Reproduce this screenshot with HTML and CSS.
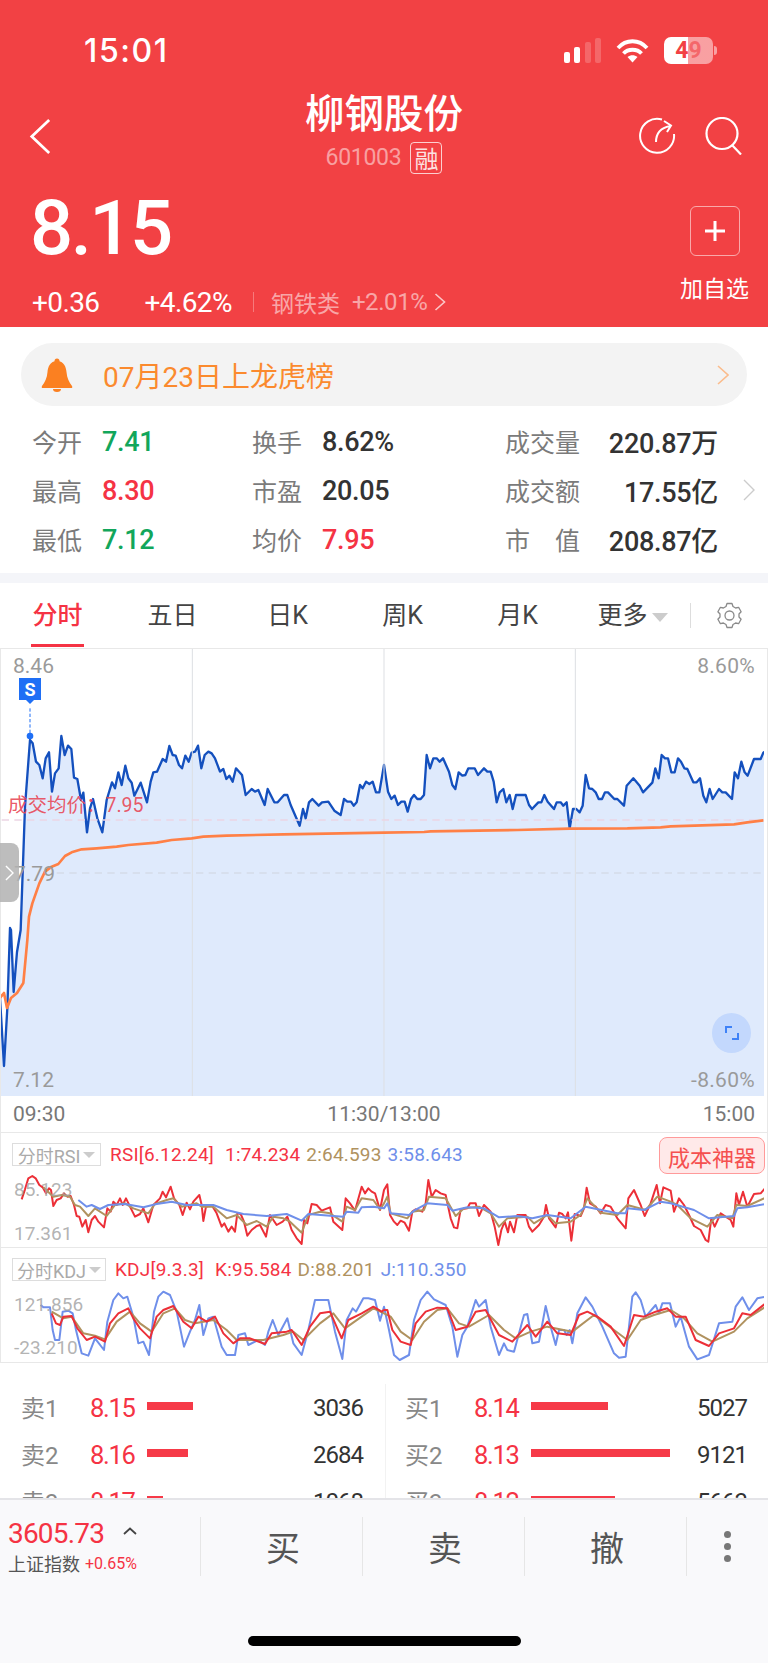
FILE: index.html
```html
<!DOCTYPE html>
<html lang="zh-CN">
<head>
    <meta charset="utf-8">
    <title>柳钢股份</title>
    <link rel="stylesheet" href="styles.css">
</head>
<body>
<div class="page">
    <header class="head">
        <div class="status">
            <span class="time">15:01</span>
            <div class="status-icons">
                <div class="signal"><i class="on s1"></i><i class="on s2"></i><i class="s3"></i><i class="s4"></i></div>
                <svg class="wifi" viewBox="0 0 33 24"><path d="M2 9C10 0 23 0 31 9M7.5 14.5C12 9.5 21 9.5 25.5 14.5" fill="none" stroke="#fff" stroke-width="3.8"/><path d="M16.5 23.5L11.5 18C14.5 15.5 18.5 15.5 21.5 18Z" fill="#fff"/></svg>
                <div class="battery"><span class="b-on">4</span><span class="b-off">9</span></div>
                <i class="nub"></i>
            </div>
        </div>

        <div class="nav">
            <svg class="back" viewBox="0 0 24 40"><path d="M22 2L3 20L22 38" fill="none" stroke="#fff" stroke-width="3"/></svg>
            <div class="title-box">
                <h1>柳钢股份</h1>
                <div class="code"><span>601003</span><b class="rong">融</b></div>
            </div>
            <div class="nav-icons">
                <svg class="nav-icon" viewBox="0 0 38 38"><path d="M24 2.5A17 17 0 1 0 36 17" fill="none" stroke="#fff" stroke-width="2"/><path d="M18 25C18 16 22 11 32 9M26 4L33 8.5L29 15" fill="none" stroke="#fff" stroke-width="2"/></svg>
                <svg class="nav-icon" viewBox="0 0 38 38"><circle cx="18" cy="16.5" r="15.5" fill="none" stroke="#fff" stroke-width="2.2"/><path d="M28 28L37 37.5" stroke="#fff" stroke-width="2.2"/></svg>
            </div>
        </div>

        <div class="quote">
            <div>
                <div class="price">8.15</div>
                <div class="change">
                    <span class="chg-a">+0.36</span>
                    <span class="chg-b">+4.62%</span>
                    <i class="chg-sep"></i>
                    <span class="sector">钢铁类</span>
                    <span class="sector-pct">+2.01%</span>
                    <svg class="sector-arrow" viewBox="0 0 12 18"><path d="M1.5 1L10.5 9L1.5 17" fill="none" stroke="#fff" stroke-opacity=".7" stroke-width="1.6"/></svg>
                </div>
            </div>
            <div class="add">
                <div class="add-btn"><svg viewBox="0 0 20 20"><path d="M10 0V20M0 10H20" stroke="#fff" stroke-width="3"/></svg></div>
                <span>加自选</span>
            </div>
        </div>
    </header>

    <div class="notice">
        <svg class="bell" viewBox="0 0 32 34"><circle cx="16" cy="3" r="2.5" fill="#FB8021"/><path d="M16 3C9 3 7 9 6.5 14C6 20 4 24 1 28Q0 30 2 30H30Q32 30 31 28C28 24 26 20 25.5 14C25 9 23 3 16 3Z" fill="#FB8021"/><path d="M12 31a4 3 0 0 0 8 0z" fill="#FB8021"/></svg>
        <span class="notice-text">07月23日上龙虎榜</span>
        <svg class="notice-arrow" viewBox="0 0 12 20"><path d="M1 1L11 10L1 19" fill="none" stroke="#FBBC8C" stroke-width="1.6"/></svg>
    </div>

    <section class="stats">
        <div class="stat-grid">
            <div class="stat"><span class="lbl">今开</span><span class="val green">7.41</span></div>
            <div class="stat"><span class="lbl">换手</span><span class="val">8.62%</span></div>
            <div class="stat wide"><span class="lbl">成交量</span><span class="val">220.87万</span></div>
            <div class="stat"><span class="lbl">最高</span><span class="val red">8.30</span></div>
            <div class="stat"><span class="lbl">市盈</span><span class="val">20.05</span></div>
            <div class="stat wide"><span class="lbl">成交额</span><span class="val">17.55亿</span></div>
            <div class="stat"><span class="lbl">最低</span><span class="val green">7.12</span></div>
            <div class="stat"><span class="lbl">均价</span><span class="val red">7.95</span></div>
            <div class="stat wide"><span class="lbl spread">市值</span><span class="val">208.87亿</span></div>
        </div>
        <svg class="stats-arrow" viewBox="0 0 12 22"><path d="M1 1L11 11L1 21" fill="none" stroke="#ccc" stroke-width="1.4"/></svg>
    </section>

    <div class="band"></div>

    <nav class="tabs">
        <a class="tab active"><span>分时</span></a>
        <a class="tab"><span>五日</span></a>
        <a class="tab"><span>日K</span></a>
        <a class="tab"><span>周K</span></a>
        <a class="tab"><span>月K</span></a>
        <a class="tab"><span>更多<i class="tri"></i></span></a>
        <div class="tab-gear">
            <svg viewBox="0 0 26 27"><path d="M10.5 1.5h5l1 3 2.6 1.5 3-.7 2.5 4.4-2.1 2.3v3l2.1 2.3-2.5 4.4-3-.7-2.6 1.5-1 3h-5l-1-3-2.6-1.5-3 .7-2.5-4.4 2.1-2.3v-3L1.4 9.7l2.5-4.4 3 .7 2.6-1.5z" fill="none" stroke="#8a8a8a" stroke-width="1.3" stroke-linejoin="round"/><circle cx="13" cy="13.5" r="4.5" fill="none" stroke="#8a8a8a" stroke-width="1.3"/></svg>
        </div>
    </nav>

    <section class="chart-box">
        <div class="main-chart">
            <svg class="fill-svg" viewBox="3 27 2289 1341">
                <polyline class="price-line" points="-20,1500 -20,1074 0,1074 12,1278 22,1104 30,864 33,870 41,1056 51,936 62,870 75,500 90,300 98,310 108,365 118,375 128,415 137,355 147,337 156,455 165,400 176,385 184,288 194,345 204,317 214,327 222,413 232,417 243,480 250,458 261,577 270,505 279,477 292,535 307,577 320,480 336,427 345,445 355,397 365,435 376,377 385,415 395,428 403,467 422,428 441,487 452,425 460,397 471,395 488,357 498,365 508,318 518,345 527,347 537,375 546,385 556,347 566,365 575,338 585,335 594,317 604,385 614,345 625,335 635,340 645,355 660,395 670,387 679,417 688,407 698,425 708,385 726,405 737,465 755,447 765,455 775,450 794,495 803,447 823,487 833,487 852,465 862,465 872,495 899,557 909,507 917,535 927,487 937,477 956,497 966,487 985,485 1003,512 1022,525 1032,477 1042,485 1053,485 1061,497 1070,487 1080,435 1088,445 1098,425 1108,432 1118,425 1128,457 1138,457 1152,375 1164,455 1174,477 1184,467 1194,495 1204,485 1214,485 1223,515 1233,477 1242,465 1252,477 1262,477 1272,465 1280,345 1290,385 1300,355 1310,355 1319,365 1329,355 1347,395 1357,435 1366,447 1376,397 1387,407 1396,405 1405,385 1424,385 1434,405 1452,385 1462,395 1472,395 1481,425 1490,487 1499,457 1510,447 1519,487 1529,465 1538,507 1548,465 1577,465 1587,495 1596,507 1615,487 1624,487 1633,465 1643,485 1662,507 1670,487 1682,487 1690,497 1700,487 1709,565 1719,507 1729,507 1739,517 1748,497 1757,405 1767,445 1777,447 1787,457 1796,477 1806,477 1815,457 1824,457 1843,477 1852,477 1872,497 1880,437 1900,415 1919,437 1929,457 1957,428 1966,385 1976,415 1985,345 1995,355 2004,355 2014,397 2024,397 2034,355 2043,365 2053,385 2062,387 2080,427 2090,427 2100,415 2110,467 2119,487 2129,447 2138,477 2157,447 2167,457 2177,457 2196,477 2204,397 2214,415 2224,365 2234,397 2243,407 2262,357 2282,357 2290,338 2310,325 2310,1500"/>
                <path class="grid-v" d="M577 0V1400M1152 0V1400M1726 0V1400"/>
                <path class="dash-red" d="M5 540H2292"/>
                <path class="dash-grey" d="M170 699H2292"/>
                <polyline class="avg-line" points="0,1074 12,1059 21,1104 33,1074 51,1059 70,1029 82,900 87,830 97,790 118,730 135,695 155,680 175,672 195,648 215,637 245,628 290,625 350,620 385,615 470,608 515,600 575,595 610,590 680,587 850,583 1152,578 1272,576 1292,574 1552,570 1709,566 1882,565 1982,562 2012,559 2202,553 2242,547 2290,541"/>
                <path class="flag-dash" d="M90 205V282"/>
                <circle cx="90" cy="288" r="10" fill="#1F6FF5"/>
            </svg>
            <span class="axis tl">8.46</span>
            <span class="axis tr">8.60%</span>
            <span class="axis bl">7.12</span>
            <span class="axis br">-8.60%</span>
            <span class="axis mid">7.79</span>
            <span class="avg-label">成交均价：7.95</span>
            <b class="s-flag">S</b>
            <div class="handle"><svg viewBox="0 0 10 18"><path d="M1 1L9 9L1 17" fill="none" stroke="#fff" stroke-width="1.6"/></svg></div>
            <div class="expand"><svg viewBox="0 0 14 14"><path d="M1 7V1H7M13 7V13H7" fill="none" stroke="#3F82F7" stroke-width="2"/></svg></div>
        </div>

        <div class="time-row"><span>09:30</span><span>11:30/13:00</span><span>15:00</span></div>

        <div class="sub-panel">
            <svg class="fill-svg" viewBox="3 129 2289 342">
                <polyline class="ln ln-red" points="65,328 75,298 85,265 97,258 107,265 118,285 128,292 138,310 147,295 153,300 160,348 170,330 182,325 192,310 202,320 212,318 222,345 230,378 238,380 247,410 257,390 265,427 275,390 285,378 295,395 312,412 322,355 332,365 340,335 350,345 360,325 368,345 378,325 390,350 405,380 420,372 430,355 445,397 460,345 480,325 488,305 498,322 512,290 522,325 538,345 548,375 560,338 570,358 580,335 598,315 605,345 610,393 618,350 635,345 650,370 665,410 673,400 685,425 695,410 705,425 712,370 722,372 732,395 742,437 755,420 770,408 780,405 798,440 810,375 830,405 848,395 862,380 875,420 890,445 905,462 912,390 922,400 935,342 950,345 965,362 990,352 1000,395 1027,420 1037,325 1050,340 1065,362 1085,290 1095,310 1105,295 1115,305 1125,310 1140,360 1152,300 1162,283 1170,375 1182,395 1192,405 1202,392 1214,398 1227,422 1237,365 1247,358 1267,365 1277,340 1285,270 1295,320 1307,300 1322,310 1337,315 1352,385 1362,412 1372,415 1382,358 1402,355 1410,340 1427,340 1437,378 1452,345 1472,365 1484,410 1495,465 1504,420 1514,395 1524,427 1530,395 1542,427 1552,375 1577,375 1587,410 1597,425 1617,405 1632,380 1638,345 1647,385 1667,412 1677,368 1687,372 1697,385 1704,367 1714,452 1724,372 1742,378 1752,355 1760,293 1770,340 1787,350 1802,370 1817,345 1832,350 1852,385 1877,415 1885,325 1902,300 1922,345 1934,378 1952,340 1970,285 1980,340 1990,292 2012,302 2022,365 2037,325 2052,345 2067,375 2082,408 2102,420 2117,450 2125,455 2134,385 2144,410 2162,370 2192,390 2200,410 2209,310 2217,345 2229,305 2242,350 2262,312 2282,310 2297,293"/>
                <polyline class="ln ln-brown" points="130,292 160,320 185,315 210,320 225,345 240,350 265,378 285,355 320,378 345,345 375,340 400,355 445,370 465,342 500,330 520,325 545,350 590,340 605,350 640,350 680,385 710,375 740,405 770,393 800,410 820,380 850,385 870,395 905,428 925,375 960,365 990,370 1027,395 1040,350 1065,360 1085,325 1120,330 1140,358 1152,340 1162,320 1172,370 1222,385 1237,365 1272,360 1287,320 1337,325 1367,378 1392,355 1437,350 1472,370 1497,410 1522,385 1582,380 1602,400 1642,375 1667,400 1712,395 1742,375 1762,325 1802,368 1852,375 1882,345 1937,360 1972,320 2012,335 2032,345 2072,385 2122,410 2152,375 2197,385 2209,345 2242,348 2297,323"/>
                <polyline class="ln ln-blue" points="235,330 260,350 275,345 300,357 325,345 375,342 430,352 470,342 515,335 560,345 640,345 680,360 730,372 800,378 860,372 905,392 925,372 1000,378 1030,380 1040,365 1075,368 1085,352 1120,350 1152,355 1162,340 1172,370 1227,375 1242,362 1282,340 1342,345 1357,362 1402,352 1452,355 1497,382 1552,378 1597,385 1642,375 1712,385 1757,350 1852,370 1877,370 1882,355 1932,360 1982,335 2012,340 2082,360 2127,385 2202,378 2212,355 2242,352 2297,342"/>
            </svg>
            <div class="sub-head">
                <span class="chip">分时RSI<i class="tri small"></i></span>
                <span class="leg red-t name">RSI[6.12.24]</span>
                <span class="leg red-t">1:74.234</span>
                <span class="leg brown-t">2:64.593</span>
                <span class="leg blue-t">3:58.643</span>
            </div>
            <span class="sub-val v-top">85.123</span>
            <span class="sub-val v-low">17.361</span>
            <span class="cost-btn">成本神器</span>
        </div>

        <div class="sub-panel">
            <svg class="fill-svg" viewBox="3 474 2289 342">
                <polyline class="ln ln-blue" points="122,645 130,652 150,652 158,720 165,750 178,750 188,665 205,662 218,670 228,720 245,790 265,797 285,745 312,780 322,695 340,630 355,610 370,625 382,620 400,680 415,760 430,755 447,795 462,665 475,620 490,605 510,615 530,665 552,770 570,725 585,690 598,645 610,735 625,685 640,680 665,770 680,795 705,795 715,735 735,730 745,765 775,750 795,765 805,725 818,690 835,735 862,685 880,760 905,795 925,720 945,630 985,630 1005,725 1027,807 1040,690 1058,655 1068,665 1090,625 1105,625 1125,630 1140,692 1152,650 1167,720 1182,795 1199,810 1227,795 1242,690 1262,630 1282,605 1302,628 1337,645 1357,710 1372,800 1387,735 1402,710 1427,630 1437,650 1457,630 1472,710 1497,795 1512,760 1522,780 1542,785 1572,675 1582,672 1597,760 1617,755 1637,648 1652,710 1667,765 1677,720 1692,720 1700,735 1709,720 1717,760 1732,670 1757,622 1777,650 1807,710 1842,790 1857,803 1877,800 1897,620 1907,607 1922,630 1937,680 1967,645 1977,670 1987,640 2010,640 2027,710 2042,680 2067,770 2092,808 2127,795 2157,700 2197,695 2207,650 2227,622 2247,660 2272,625 2297,620"/>
                <polyline class="ln ln-brown" points="155,665 190,685 215,680 250,730 285,737 315,748 350,695 390,665 420,700 455,725 490,670 525,655 555,690 585,700 640,690 680,720 710,750 790,750 850,735 880,725 910,750 960,700 1000,670 1035,715 1085,680 1120,655 1152,670 1172,680 1202,725 1237,750 1272,695 1312,660 1342,655 1377,700 1407,710 1467,675 1512,720 1547,745 1592,725 1642,710 1717,725 1782,675 1842,720 1882,750 1922,690 1962,675 2012,660 2052,685 2092,730 2137,755 2202,725 2242,685 2297,650"/>
                <polyline class="ln ln-red" points="155,670 168,700 180,705 190,680 215,678 232,715 260,750 285,740 315,755 330,700 355,670 385,655 400,685 420,715 450,745 470,680 490,660 520,648 550,695 575,715 595,680 620,695 645,680 670,730 700,760 720,745 750,745 795,762 815,730 860,725 875,720 905,765 930,710 960,670 990,665 1025,745 1045,690 1085,670 1120,650 1145,665 1152,660 1162,660 1177,720 1202,755 1232,765 1247,700 1277,665 1312,653 1342,655 1367,720 1402,710 1427,665 1457,660 1497,735 1537,755 1582,705 1607,740 1642,695 1672,730 1712,735 1737,675 1762,665 1792,680 1832,710 1872,768 1902,675 1932,680 1967,665 2002,655 2027,680 2057,680 2087,750 2127,768 2157,730 2202,715 2227,670 2252,675 2297,640"/>
            </svg>
            <div class="sub-head">
                <span class="chip kdj">分时KDJ<i class="tri small"></i></span>
                <span class="leg red-t name">KDJ[9.3.3]</span>
                <span class="leg red-t">K:95.584</span>
                <span class="leg brown-t">D:88.201</span>
                <span class="leg blue-t">J:110.350</span>
            </div>
            <span class="sub-val v-top">121.856</span>
            <span class="sub-val v-low2">-23.210</span>
        </div>
    </section>

    <section class="book">
        <div class="book-col left">
            <div class="book-row"><span class="b-lbl">卖1</span><span class="b-price">8.15</span><span class="b-bar"><i style="width:46px"></i></span><span class="b-qty">3036</span></div>
            <div class="book-row"><span class="b-lbl">卖2</span><span class="b-price">8.16</span><span class="b-bar"><i style="width:41px"></i></span><span class="b-qty">2684</span></div>
            <div class="book-row"><span class="b-lbl">卖3</span><span class="b-price">8.17</span><span class="b-bar"><i style="width:16px"></i></span><span class="b-qty">1068</span></div>
        </div>
        <div class="book-col right">
            <div class="book-row"><span class="b-lbl">买1</span><span class="b-price">8.14</span><span class="b-bar"><i style="width:77px"></i></span><span class="b-qty">5027</span></div>
            <div class="book-row"><span class="b-lbl">买2</span><span class="b-price">8.13</span><span class="b-bar"><i style="width:139px"></i></span><span class="b-qty">9121</span></div>
            <div class="book-row"><span class="b-lbl">买3</span><span class="b-price">8.12</span><span class="b-bar"><i style="width:84px"></i></span><span class="b-qty">5663</span></div>
        </div>
    </section>

    <footer class="foot">
        <div class="foot-row">
            <div class="index">
                <div class="index-top"><span class="index-val">3605.73</span><svg class="caret" viewBox="0 0 14 8"><path d="M1 7L7 1.5L13 7" fill="none" stroke="#444" stroke-width="1.8"/></svg></div>
                <div class="index-sub"><span>上证指数</span><span class="index-pct">+0.65%</span></div>
            </div>
            <div class="act">买</div>
            <div class="act">卖</div>
            <div class="act">撤</div>
            <div class="act more"><i></i><i></i><i></i></div>
        </div>
        <div class="home-bar"></div>
    </footer>
</div>
</body>
</html>
```

FILE: styles.css
```css
* {
    box-sizing: border-box;
}
body {
    margin: 0;
    background-color: #fff;
    font-family: Roboto, "Noto Sans CJK SC", sans-serif;
    color: #333;
}
i {
    font-style: normal;
}
.page {
    width: 768px;
    height: 1663px;
    overflow: hidden;
    display: flex;
    flex-direction: column;
}

/* red header */
.head {
    height: 327px;
    flex: none;
    padding-top: 37px;
    background-color: #F24144;
    color: #fff;
}
.status {
    display: flex;
    justify-content: space-between;
    align-items: center;
    height: 27px;
    padding: 0 51px 0 84px;
}
.time {
    font-family: Inter, sans-serif;
    font-size: 32px;
    font-weight: 500;
    letter-spacing: 1.6px;
}
.status-icons {
    display: flex;
    align-items: center;
}
.signal {
    display: flex;
    align-items: flex-end;
    gap: 4.5px;
    height: 25px;
    margin-right: 15px;
}
.signal i {
    width: 6px;
    border-radius: 2px;
    background-color: rgba(255,255,255,.2);
}
.signal i.on {
    background-color: #fff;
}
.s1 { height: 11px; }
.s2 { height: 16px; }
.s3 { height: 21px; }
.s4 { height: 25px; }
.wifi {
    width: 33px;
    height: 24px;
    margin-right: 15px;
}
.battery {
    width: 49px;
    height: 27px;
    border-radius: 7px;
    display: flex;
    justify-content: center;
    align-items: center;
    font-size: 23px;
    font-weight: 700;
    background: linear-gradient(90deg, #fff 48%, rgba(255,255,255,.5) 48%);
}
.b-on {
    color: #F24144;
}
.b-off {
    color: rgba(242,65,68,.6);
}
.nub {
    width: 3px;
    height: 9px;
    margin-left: 1px;
    border-radius: 0 3px 3px 0;
    background-color: rgba(255,255,255,.5);
}

.nav {
    display: grid;
    grid-template-columns: 1fr auto 1fr;
    align-items: center;
    height: 84px;
    margin-top: 30px;
    padding: 0 26px;
}
.back {
    width: 22px;
    height: 39px;
    margin-left: 3px;
}
.title-box {
    text-align: center;
}
h1 {
    margin: -3px 0 0;
    font-size: 39.5px;
    line-height: 38px;
    font-weight: 500;
}
.code {
    display: flex;
    justify-content: center;
    align-items: center;
    gap: 9px;
    margin-top: 8px;
    font-size: 23px;
    color: rgba(255,255,255,.5);
    letter-spacing: -.3px;
}
.rong {
    width: 32px;
    height: 32px;
    display: flex;
    justify-content: center;
    align-items: center;
    border: 1px solid rgba(255,255,255,.75);
    border-radius: 4px;
    font-size: 24px;
    font-weight: 400;
    color: rgba(255,255,255,.85);
}
.nav-icons {
    display: flex;
    justify-content: flex-end;
    gap: 28px;
}
.nav-icon {
    width: 38px;
    height: 38px;
}

.quote {
    display: flex;
    justify-content: space-between;
    padding: 12px 19px 0 32px;
}
.price {
    margin-left: -2px;
    font-size: 76px;
    line-height: 76px;
    font-weight: 500;
    letter-spacing: -2.5px;
}
.change {
    display: flex;
    align-items: center;
    height: 30px;
    margin-top: 21px;
}
.chg-a,
.chg-b {
    font-size: 28px;
    letter-spacing: -.6px;
}
.chg-b {
    margin-left: 45px;
}
.chg-sep {
    width: 1px;
    height: 20px;
    margin: 0 17px 0 21px;
    background-color: rgba(255,255,255,.3);
}
.sector {
    font-size: 23px;
    color: rgba(255,255,255,.55);
}
.sector-pct {
    margin-left: 12px;
    font-size: 24px;
    letter-spacing: -.4px;
    color: rgba(255,255,255,.55);
}
.sector-arrow {
    width: 12px;
    height: 18px;
    margin-left: 7px;
}
.add {
    display: flex;
    flex-direction: column;
    align-items: center;
    padding-top: 16px;
    font-size: 23px;
    line-height: 24px;
}
.add-btn {
    display: flex;
    justify-content: center;
    align-items: center;
    width: 50px;
    height: 50px;
    margin-bottom: 22px;
    border: 1px solid rgba(255,255,255,.55);
    border-radius: 6px;
}
.add-btn svg {
    width: 20px;
    height: 20px;
}

/* notice pill */
.notice {
    display: flex;
    align-items: center;
    flex: none;
    height: 63px;
    margin: 16px 21px 0;
    padding: 0 18px 0 20px;
    border-radius: 32px;
    background-color: #F3F3F3;
}
.bell {
    width: 32px;
    height: 34px;
}
.notice-text {
    margin-left: 30px;
    font-size: 28px;
    color: #FB8A2E;
}
.notice-arrow {
    width: 12px;
    height: 20px;
    margin-left: auto;
}

/* quote stats */
.stats {
    display: flex;
    align-items: center;
    flex: none;
    height: 167px;
    padding: 10px 0 10px 32px;
}
.stat-grid {
    display: grid;
    grid-template-columns: 220px 253px 213px;
    grid-auto-rows: 49px;
}
.stat {
    display: flex;
    align-items: center;
}
.stat.wide {
    justify-content: space-between;
}
.lbl {
    width: 70px;
    font-size: 25px;
    color: #7b7b7b;
}
.stat.wide .lbl {
    width: auto;
}
.stat.wide .lbl.spread {
    width: 75px;
    text-align-last: justify;
}
.val {
    margin-top: 2px;
    font-size: 27px;
    font-weight: 500;
    letter-spacing: -.3px;
    color: #333;
}
.green {
    color: #12A65B;
}
.red {
    color: #F53344;
}
.stats-arrow {
    width: 12px;
    height: 22px;
    margin-left: 25px;
}
.band {
    flex: none;
    height: 10px;
    background-color: #F4F5F9;
}

/* period tabs */
.tabs {
    display: flex;
    flex: none;
    height: 65px;
}
.tab {
    width: 115px;
    display: flex;
    justify-content: center;
    font-size: 25px;
    color: #444;
}
.tab span {
    height: 47px;
    margin-top: 17px;
    padding: 0 1px;
    line-height: 32px;
    display: flex;
    align-items: flex-start;
}
.tab.active span {
    color: #F53344;
    font-weight: 500;
    border-bottom: 3px solid #F53344;
}
.tri {
    width: 0;
    height: 0;
    margin: 13px 0 0 4px;
    border-left: 8px solid transparent;
    border-right: 8px solid transparent;
    border-top: 9px solid #ccc;
}
.tab-gear {
    display: flex;
    align-items: center;
    height: 25px;
    margin-top: 20px;
    padding-left: 25px;
    border-left: 1px solid #ddd;
}
.tab-gear svg {
    width: 27px;
    height: 27px;
}

/* chart */
.chart-box {
    flex: none;
    border: 1px solid #E8E8E8;
    border-bottom: none;
}
.main-chart {
    position: relative;
    height: 447px;
}
.fill-svg {
    position: absolute;
    left: 0;
    top: 0;
    width: 763px;
    height: 100%;
}
.price-line {
    fill: #DFEAFC;
    stroke: #1450BE;
    stroke-width: 7;
    stroke-linejoin: round;
}
.grid-v {
    stroke: #DDDFE3;
    stroke-width: 3;
}
.dash-red {
    stroke: #EBD5E3;
    stroke-width: 4;
    stroke-dasharray: 22 16;
}
.dash-grey {
    stroke: #D5DBE8;
    stroke-width: 4;
    stroke-dasharray: 22 16;
}
.avg-line {
    fill: none;
    stroke: #FF8046;
    stroke-width: 8;
    stroke-linejoin: round;
}
.flag-dash {
    stroke: #1F6FF5;
    stroke-width: 3;
    stroke-dasharray: 10 6;
}
.axis {
    position: absolute;
    font-size: 21px;
    line-height: 20px;
    color: #9a9a9a;
}
.tl { left: 12px; top: 7px; }
.tr { right: 12px; top: 7px; letter-spacing: .3px; }
.bl { left: 12px; top: 421px; }
.br { right: 12px; top: 421px; letter-spacing: .3px; }
.mid { left: 13px; top: 215px; }
.avg-label {
    position: absolute;
    left: 7px;
    top: 147px;
    font-size: 19.5px;
    line-height: 20px;
    color: rgba(232,70,85,.9);
}
.s-flag {
    position: absolute;
    left: 18px;
    top: 29px;
    width: 22px;
    height: 22px;
    display: flex;
    justify-content: center;
    align-items: center;
    font-size: 18px;
    color: #fff;
    background-color: #1F6FF5;
}
.s-flag::after {
    content: "";
    position: absolute;
    left: 7px;
    top: 22px;
    border-left: 4px solid transparent;
    border-right: 4px solid transparent;
    border-top: 4px solid #1F6FF5;
}
.handle {
    position: absolute;
    left: -1px;
    top: 194px;
    width: 19px;
    height: 59px;
    display: flex;
    align-items: center;
    padding-left: 5px;
    border-radius: 0 8px 8px 0;
    background-color: rgba(178,178,178,.85);
}
.handle svg {
    width: 9px;
    height: 16px;
}
.expand {
    position: absolute;
    left: 711px;
    top: 364px;
    width: 39px;
    height: 40px;
    display: flex;
    justify-content: center;
    align-items: center;
    border-radius: 50%;
    background-color: #C3D8FD;
}
.expand svg {
    width: 14px;
    height: 14px;
}
.time-row {
    display: flex;
    justify-content: space-between;
    align-items: center;
    height: 37px;
    padding: 0 12px;
    font-size: 21px;
    color: #777;
    border-bottom: 1px solid #E8E8E8;
}

.sub-panel {
    position: relative;
    height: 115px;
    border-bottom: 1px solid #E8E8E8;
}
.ln {
    fill: none;
    stroke-width: 6;
    stroke-linejoin: round;
}
.ln-red { stroke: #EC2F37; }
.ln-brown { stroke: #B0925F; }
.ln-blue { stroke: #6F8FEA; }
.sub-head {
    position: absolute;
    left: 11px;
    top: 10px;
    display: flex;
    align-items: center;
    gap: 6px;
    height: 23px;
}
.chip {
    width: 89px;
    height: 23px;
    margin-right: 3px;
    display: flex;
    justify-content: center;
    align-items: center;
    border: 1px solid #DDD;
    font-size: 18px;
    color: #AAA;
    background-color: #fff;
}
.chip.kdj {
    width: 94px;
}
.tri.small {
    margin: 1px 0 0 3px;
    border-left-width: 6px;
    border-right-width: 6px;
    border-top-width: 6px;
}
.leg {
    font-size: 19px;
    letter-spacing: .2px;
}
.name {
    margin-right: 5px;
}
.red-t { color: #F53344; }
.brown-t { color: #B0925F; }
.blue-t { color: #6F8FEA; }
.sub-val {
    position: absolute;
    left: 13px;
    font-size: 19px;
    line-height: 20px;
    color: rgba(160,160,160,.8);
}
.v-top { top: 47px; }
.v-low { top: 91px; }
.v-low2 { top: 90px; }
.cost-btn {
    position: absolute;
    right: 2px;
    top: 4px;
    width: 106px;
    height: 37px;
    display: flex;
    justify-content: center;
    align-items: center;
    border: 1px solid #FF9A9A;
    border-radius: 8px;
    font-size: 22px;
    color: #F5504F;
    background-color: #FFE9E9;
}

/* order book */
.book {
    flex: 1;
    display: flex;
    min-height: 0;
    overflow: hidden;
    padding-top: 21px;
}
.book-col.left {
    width: 386px;
    padding: 0 22px 0 21px;
    border-right: 1px solid #F2F2F2;
}
.book-col.right {
    flex: 1;
    padding: 0 21px 0 19px;
}
.book-row {
    display: flex;
    align-items: center;
    height: 47px;
}
.b-lbl {
    width: 69px;
    margin-top: -3px;
    font-size: 24px;
    color: #888;
}
.b-price {
    width: 57px;
    font-size: 25.5px;
    letter-spacing: -1.3px;
    color: #F53344;
}
.b-bar {
    flex: 1;
    display: flex;
}
.b-bar i {
    height: 8px;
    margin-top: -3px;
    background-color: #F63A48;
}
.b-qty {
    font-size: 24px;
    letter-spacing: -1px;
    color: #333;
}

/* bottom bar */
.foot {
    flex: none;
    height: 165px;
    border-top: 2px solid #E4E4E8;
    background-color: #F9F9FB;
}
.foot-row {
    display: flex;
    height: 59px;
    margin-top: 17px;
}
.index {
    width: 200px;
    padding-left: 8px;
}
.index-top {
    display: flex;
    align-items: center;
    height: 32px;
}
.index-val {
    font-size: 28px;
    letter-spacing: -.8px;
    color: #F53344;
}
.caret {
    width: 14px;
    height: 8px;
    margin: -4px 0 0 19px;
}
.index-sub {
    display: flex;
    align-items: center;
    gap: 5px;
    margin-top: 1px;
    font-size: 18px;
    color: #555;
}
.index-pct {
    font-size: 16px;
    color: #F53344;
}
.act {
    width: 162px;
    display: flex;
    justify-content: center;
    align-items: center;
    padding-left: 3px;
    border-left: 1px solid #E6E6E6;
    font-size: 34px;
    color: #555;
}
.act.more {
    flex: 1;
    width: auto;
    flex-direction: column;
    gap: 5px;
    padding-left: 0;
}
.act.more i {
    width: 7px;
    height: 7px;
    border-radius: 50%;
    background-color: #777;
}
.home-bar {
    width: 273px;
    height: 10px;
    margin: 60px auto 0;
    border-radius: 5px;
    background-color: #000;
}
```
